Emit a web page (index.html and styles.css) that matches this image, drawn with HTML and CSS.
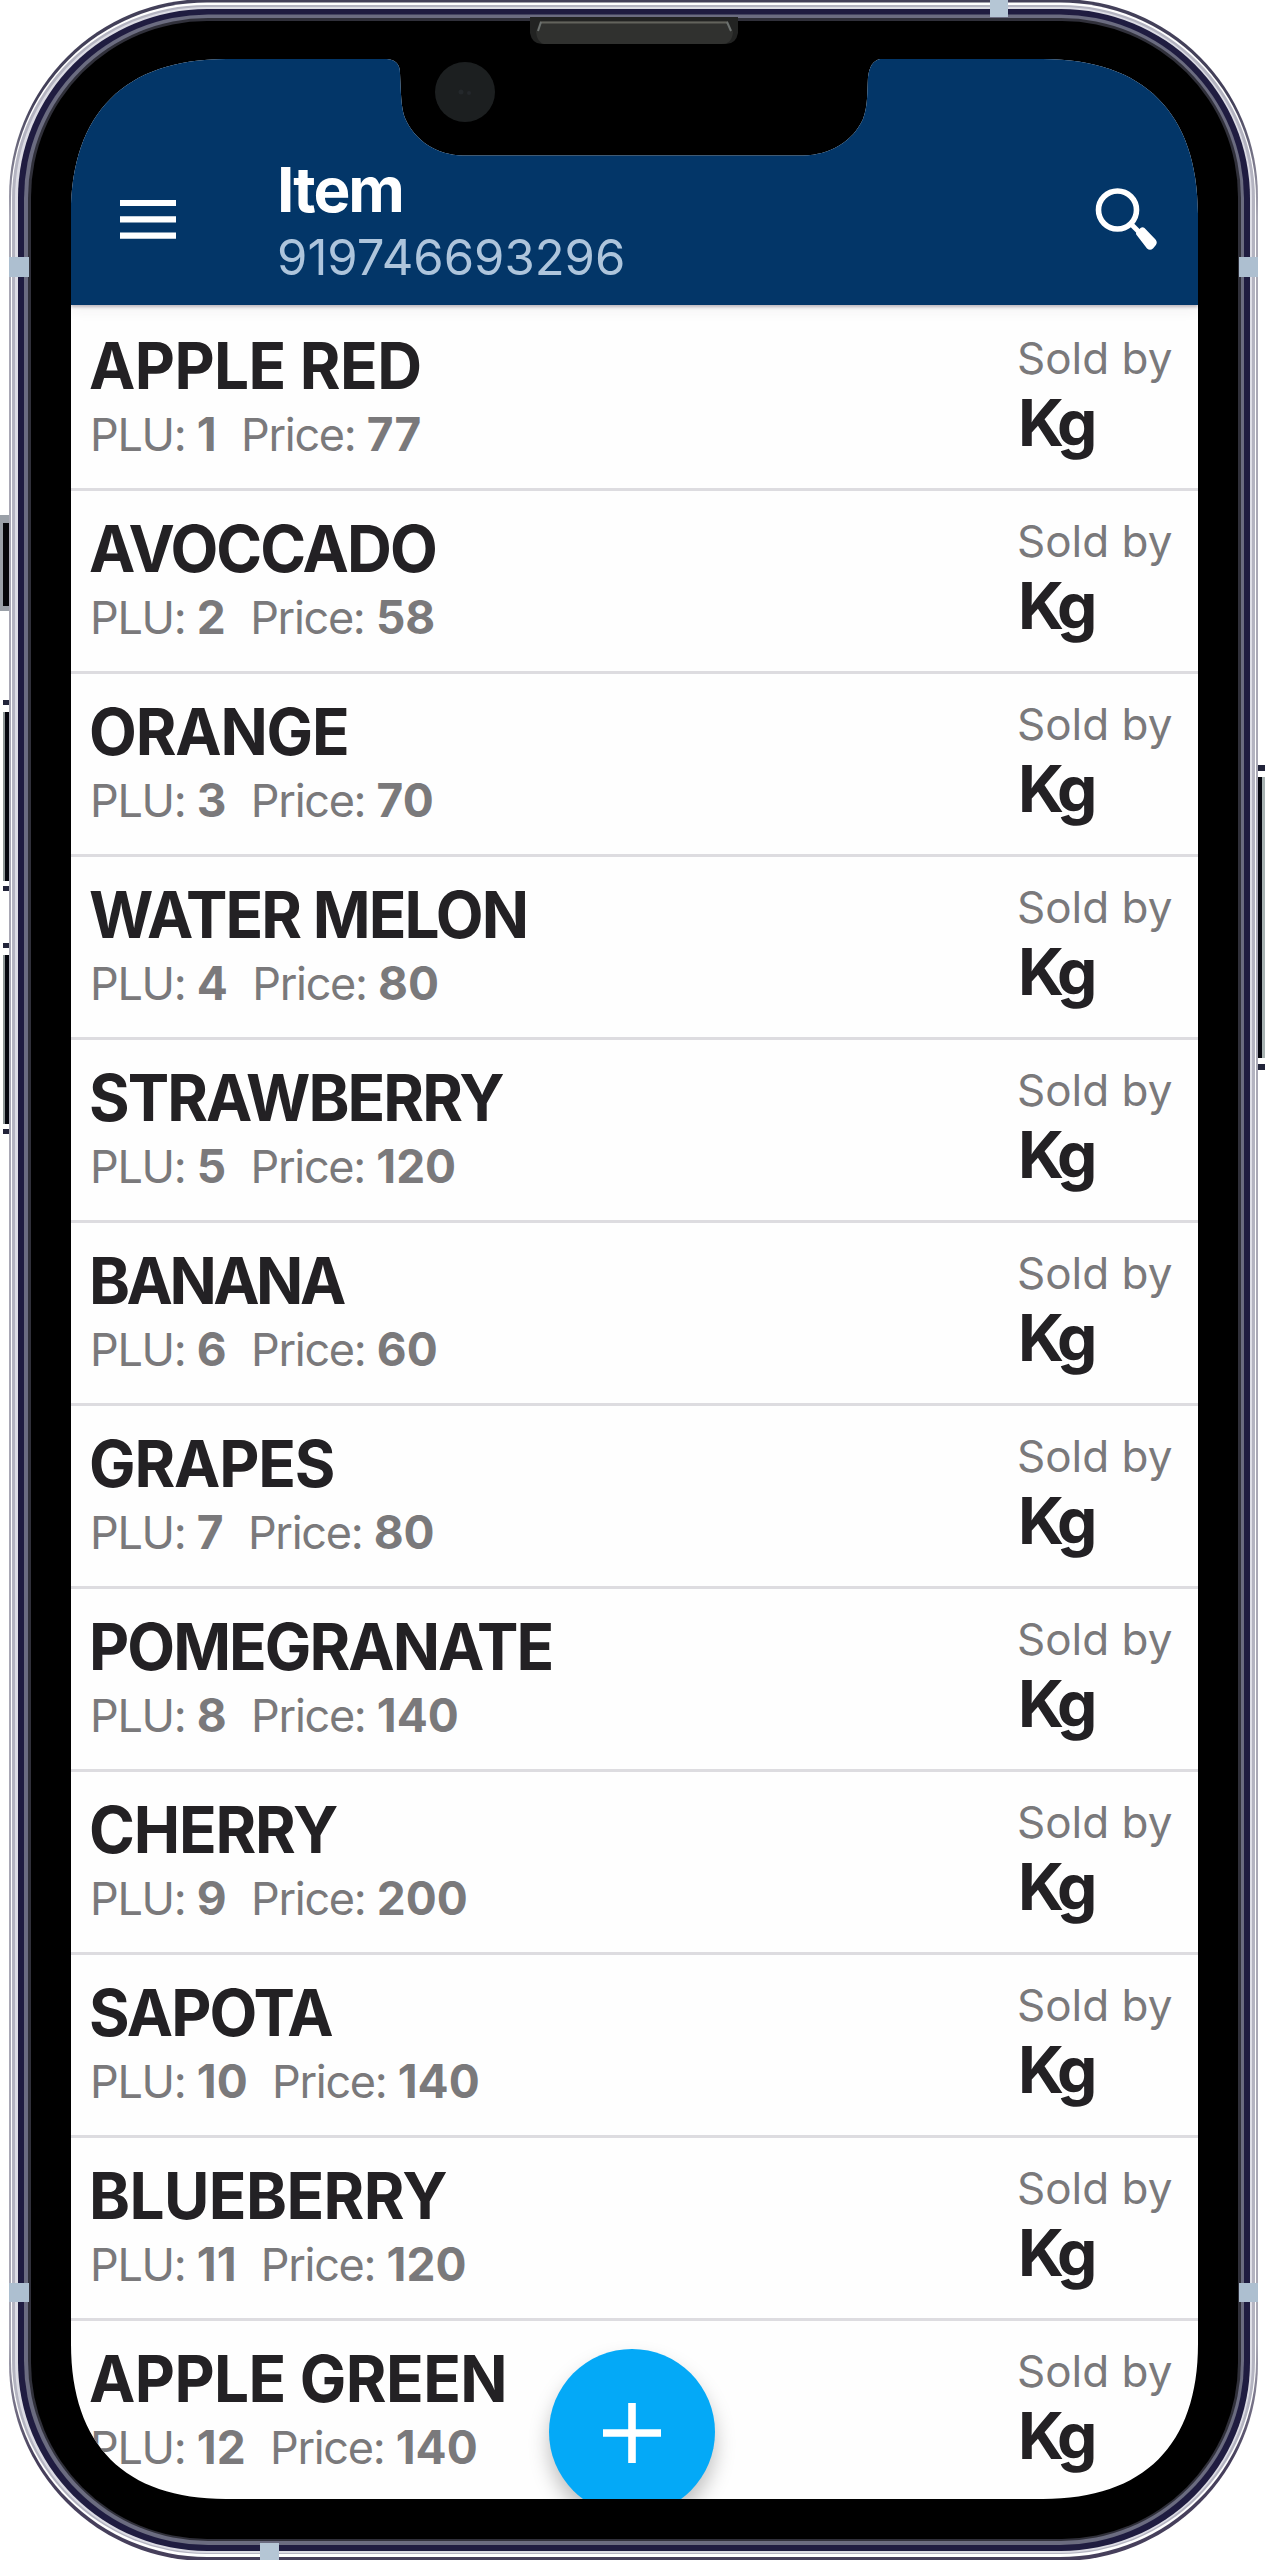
FILE: index.html
```html
<!DOCTYPE html>
<html lang="en">
<head>
    <meta charset="UTF-8">
    <meta name="viewport" content="width=device-width, initial-scale=1.0">
    <title>Item</title>
    <link rel="stylesheet" href="styles.css">
</head>
<body>
    <div class="phone">
        <svg class="frame" width="1265" height="2560" viewBox="0 0 1265 2560">
            <defs>
                <linearGradient id="edge" x1="0" y1="0" x2="0" y2="1">
                    <stop offset="0" stop-color="#434059"/>
                    <stop offset="0.04" stop-color="#434059"/>
                    <stop offset="0.085" stop-color="#a9a8b5"/>
                    <stop offset="0.915" stop-color="#a9a8b5"/>
                    <stop offset="0.96" stop-color="#463f5b"/>
                    <stop offset="1" stop-color="#463f5b"/>
                </linearGradient>
            </defs>
            <!-- side buttons -->
            <rect x="0" y="515" width="14" height="96" fill="#9aa0a8"/>
            <rect x="3" y="523" width="11" height="83" fill="#05060a"/>
            <rect x="3" y="700" width="9" height="5" fill="#22243a"/>
            <rect x="3" y="712" width="9" height="169" fill="#8d9596"/>
            <rect x="5" y="712" width="8" height="169" fill="#05060f"/>
            <rect x="3" y="886" width="9" height="5" fill="#22243a"/>
            <rect x="3" y="943" width="9" height="5" fill="#22243a"/>
            <rect x="3" y="955" width="9" height="169" fill="#8d9596"/>
            <rect x="5" y="955" width="8" height="169" fill="#05060f"/>
            <rect x="3" y="1129" width="9" height="5" fill="#22243a"/>
            <rect x="1256" y="765" width="9" height="6" fill="#22243a"/>
            <rect x="1256" y="777" width="9" height="281" fill="#a9b3b3"/>
            <rect x="1256" y="777" width="6" height="281" fill="#05060f"/>
            <rect x="1256" y="1064" width="9" height="6" fill="#22243a"/>
            <!-- metal body -->
            <rect x="9" y="-1" width="1249" height="2562" rx="198" fill="url(#edge)"/>
            <rect x="11" y="2.500" width="1245" height="2554.500" rx="196" fill="#fff"/>
            <rect x="12" y="5" width="1243" height="2549" rx="194" fill="#b4b4c1"/>
            <rect x="15" y="7" width="1237" height="2546" rx="192" fill="#dcdce4"/>
            <rect x="18" y="9" width="1232" height="2542" rx="189" fill="#1f1c40"/>
            <rect x="24" y="14.500" width="1220" height="2530.500" rx="184" fill="#6b6c80"/>
            <rect x="28" y="18" width="1213" height="2523" rx="180" fill="#30303a"/>
            <rect x="31" y="21" width="1207" height="2518" rx="176" fill="#000"/>
            <!-- antenna bands -->
            <rect x="9" y="257" width="20" height="20" fill="#adbfd0"/>
            <rect x="1239" y="257" width="19" height="20" fill="#adbfd0"/>
            <rect x="9" y="2283" width="20" height="19" fill="#adbfd0"/>
            <rect x="1239" y="2283" width="19" height="19" fill="#adbfd0"/>
            <rect x="990" y="0" width="18" height="17" fill="#b5c6d5"/>
            <rect x="260" y="2543" width="19" height="17" fill="#b5c6d5"/>
            <!-- speaker and camera -->
            <path d="M530 17H738V33Q736 44 726 44H542Q532 44 530 33Z" fill="#222322"/>
            <path d="M540 21H728L733 32Q732 44 722 44H544Q537 42 536 32Z" fill="#30312f"/>
            <path d="M540 22.500H728" stroke="#62635c" stroke-width="2"/>
            <path d="M541 22L538 31M727 22L731 31" stroke="#6c716f" stroke-width="2"/>
            <circle cx="465" cy="92" r="30" fill="#1c1f20"/>
            <circle cx="461" cy="92" r="2.500" fill="#24282b"/>
            <circle cx="469" cy="93" r="2" fill="#24282b"/>
        </svg>

        <div class="screen">
            <header class="topbar">
                <svg class="menu" width="56" height="39" viewBox="0 0 56 39">
                    <path d="M0 3H56M0 19.300H56M0 35.700H56" stroke="#fff" stroke-width="6.200"/>
                </svg>
                <div class="heading">
                    <h1>Item</h1>
                    <p>919746693296</p>
                </div>
                <svg class="search" width="64" height="66" viewBox="0 0 64 66">
                    <circle cx="23.500" cy="23" r="19" fill="none" stroke="#fff" stroke-width="5.600"/>
                    <path d="M37 37L46 46" stroke="#fff" stroke-width="5"/>
                    <path d="M43 48.500Q41 46.500 43 44.500L46.500 41Q48.500 39.500 50.500 41L61.500 52.500Q64 55.500 61.500 58.500L59 61.500Q56 64 53 61.500Z" fill="#fff"/>
                </svg>
            </header>
            <ul class="items">
                <li>
                    <div class="info"><h2 class="wide">APPLE RED</h2><p>PLU: <b>1</b> <span>Price: <b>77</b></span></p></div>
                    <div class="sold"><p>Sold by</p><b>Kg</b></div>
                </li>
                <li>
                    <div class="info"><h2>AVOCCADO</h2><p>PLU: <b>2</b> <span>Price: <b>58</b></span></p></div>
                    <div class="sold"><p>Sold by</p><b>Kg</b></div>
                </li>
                <li>
                    <div class="info"><h2 class="medium">ORANGE</h2><p>PLU: <b>3</b> <span>Price: <b>70</b></span></p></div>
                    <div class="sold"><p>Sold by</p><b>Kg</b></div>
                </li>
                <li>
                    <div class="info"><h2>WATER MELON</h2><p>PLU: <b>4</b> <span>Price: <b>80</b></span></p></div>
                    <div class="sold"><p>Sold by</p><b>Kg</b></div>
                </li>
                <li>
                    <div class="info"><h2>STRAWBERRY</h2><p>PLU: <b>5</b> <span>Price: <b>120</b></span></p></div>
                    <div class="sold"><p>Sold by</p><b>Kg</b></div>
                </li>
                <li>
                    <div class="info"><h2 class="tight">BANANA</h2><p>PLU: <b>6</b> <span>Price: <b>60</b></span></p></div>
                    <div class="sold"><p>Sold by</p><b>Kg</b></div>
                </li>
                <li>
                    <div class="info"><h2 class="medium">GRAPES</h2><p>PLU: <b>7</b> <span>Price: <b>80</b></span></p></div>
                    <div class="sold"><p>Sold by</p><b>Kg</b></div>
                </li>
                <li>
                    <div class="info"><h2>POMEGRANATE</h2><p>PLU: <b>8</b> <span>Price: <b>140</b></span></p></div>
                    <div class="sold"><p>Sold by</p><b>Kg</b></div>
                </li>
                <li>
                    <div class="info"><h2 class="medium">CHERRY</h2><p>PLU: <b>9</b> <span>Price: <b>200</b></span></p></div>
                    <div class="sold"><p>Sold by</p><b>Kg</b></div>
                </li>
                <li>
                    <div class="info"><h2>SAPOTA</h2><p>PLU: <b>10</b> <span>Price: <b>140</b></span></p></div>
                    <div class="sold"><p>Sold by</p><b>Kg</b></div>
                </li>
                <li>
                    <div class="info"><h2 class="wide">BLUEBERRY</h2><p>PLU: <b>11</b> <span>Price: <b>120</b></span></p></div>
                    <div class="sold"><p>Sold by</p><b>Kg</b></div>
                </li>
                <li>
                    <div class="info"><h2 class="wide">APPLE GREEN</h2><p>PLU: <b>12</b> <span>Price: <b>140</b></span></p></div>
                    <div class="sold"><p>Sold by</p><b>Kg</b></div>
                </li>
            </ul>
            <div class="add">
                <svg width="60" height="60" viewBox="0 0 60 60">
                    <path d="M1 30H59M30 0V60" stroke="#fff" stroke-width="7.600"/>
                </svg>
            </div>
        </div>
    </div>
</body>
</html>
```

FILE: styles.css
```css
* {
    box-sizing: border-box;
}
body {
    margin: 0;
    background: #fff;
    font-family: Inter, "Liberation Sans", sans-serif;
}
h1, h2, p, ul {
    margin: 0;
    padding: 0;
}
.phone {
    position: relative;
    width: 1265px;
    height: 2560px;
    padding: 59px 67px 61px 71px;
    overflow: hidden;
}
.frame {
    position: absolute;
    top: 0;
    left: 0;
}
/* rounded screen with the notch cut out of the top edge */
.screen {
    position: relative;
    width: 1127px;
    height: 2440px;
    background: #fefefe;
    overflow: hidden;
    clip-path: path("M0 155C0 54 54 0 155 0H316Q329 1 329 14C330 34 330 49 334 59C344 82 366 96 392 96.500H732C760 96 782 82 792 60C797 46 796 34 797 18Q799 2 809 0H972C1073 0 1127 54 1127 155V2285C1127 2386 1073 2440 972 2440H155C54 2440 0 2386 0 2285Z");
}
.topbar {
    position: relative;
    display: flex;
    align-items: flex-start;
    height: 246px;
    padding: 100px 40px 0 49px;
    background: #033668;
    color: #fff;
    box-shadow: 0 2px 3px rgba(60, 40, 60, 0.3), 0 4px 14px rgba(60, 40, 60, 0.07);
}
.menu {
    margin-top: 41px;
}
.heading {
    flex: 1;
    margin-left: 101px;
}
.heading h1 {
    font-size: 62px;
    font-weight: 650;
    line-height: 62px;
    letter-spacing: -2px;
}
.heading p {
    font-size: 49px;
    line-height: 50px;
    margin-top: 12px;
    color: #aec5dc;
}
.search {
    margin-top: 28px;
}
.items {
    list-style: none;
    padding-top: 3px;
}
.items li {
    display: flex;
    justify-content: space-between;
    height: 183px;
    padding: 25px 0 0 19px;
    border-bottom: 3px solid #dddce0;
}
.info h2 {
    margin-left: -1px;
    font-size: 64px;
    font-weight: 700;
    line-height: 65px;
    letter-spacing: -2px;
    white-space: nowrap;
    color: #232124;
    transform: scaleX(0.97);
    transform-origin: left;
}
.info .wide {
    letter-spacing: -0.6px;
}
.info .medium {
    letter-spacing: -1.2px;
}
.info .tight {
    letter-spacing: -3.6px;
}
.info p {
    margin-top: 11px;
    font-size: 45px;
    line-height: 50px;
    letter-spacing: -1.3px;
    color: #7a797b;
}
.info b {
    font-size: 46px;
    letter-spacing: 0;
}
.info span {
    margin-left: 13px;
}
.sold {
    width: 181px;
}
.sold p {
    font-size: 44px;
    line-height: 50px;
    color: #7a797b;
}
.sold b {
    display: block;
    margin: 7px 0 0 1px;
    font-size: 64px;
    line-height: 65px;
    letter-spacing: -4.5px;
    color: #232124;
}
.add {
    position: absolute;
    left: 478px;
    top: 2290px;
    display: flex;
    align-items: center;
    justify-content: center;
    width: 166px;
    height: 166px;
    padding-top: 2px;
    border-radius: 50%;
    background: #04a9f7;
    box-shadow: 0 12px 20px rgba(0, 0, 0, 0.25);
}
```
